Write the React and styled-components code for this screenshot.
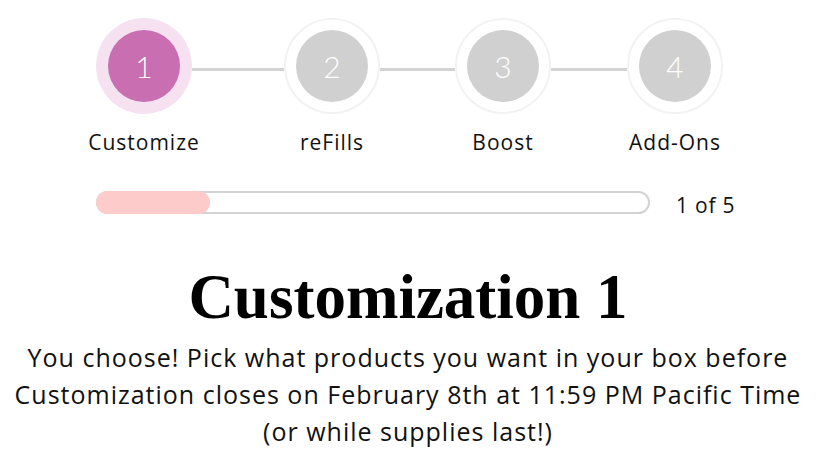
import React from "react";
import styled, { createGlobalStyle } from "styled-components";

const Global = createGlobalStyle`
  html, body { margin: 0; padding: 0; background: #fff; }
  body { font-family: "Open Sans", "Noto Sans", sans-serif; color: #111; }
`;

const Page = styled.div`
  width: 816px;
  height: 468px;
  overflow: hidden;
  display: flex;
  flex-direction: column;
  align-items: stretch;
`;

const Stepper = styled.div`
  display: flex;
  align-items: flex-start;
  padding: 18px 0 0 96px;
`;

const Step = styled.div`
  width: 96px;
  display: flex;
  flex-direction: column;
  align-items: center;
`;

const Ring = styled.div`
  width: 96px;
  height: 96px;
  box-sizing: border-box;
  border-radius: 50%;
  display: flex;
  align-items: center;
  justify-content: center;
  background: ${(p) => (p.$active ? "#f6e1f1" : "#fff")};
  border: ${(p) => (p.$active ? "none" : "2px solid #f2f2f2")};
`;

const Dot = styled.div`
  width: 72px;
  height: 72px;
  border-radius: 50%;
  background: ${(p) => (p.$active ? "#c96eb0" : "#d0d0d0")};
  color: #fff;
  display: flex;
  align-items: center;
  justify-content: center;
  font-family: Lato, sans-serif;
  font-size: 30px;
  font-weight: 300;
`;

const Label = styled.div`
  margin-top: 14px;
  font-size: 21px;
  letter-spacing: 1px;
  line-height: 28px;
  white-space: nowrap;
  color: #111;
`;

const Connector = styled.div`
  width: ${(p) => p.$w}px;
  height: 3px;
  background: #d3d3d3;
  margin-top: 50px;
`;

const ProgressRow = styled.div`
  display: flex;
  align-items: center;
  padding: 29px 0 0 96px;
  gap: 26px;
`;

const Track = styled.div`
  width: 554px;
  height: 23px;
  border-radius: 12px;
  box-shadow: inset 0 0 0 2px #d3d3d3;
  overflow: hidden;
  display: flex;
`;

const Fill = styled.div`
  height: 100%;
  border-radius: 12px;
  background: #fccbca;
`;

const Count = styled.div`
  margin-top: 6px;
  font-size: 21px;
  letter-spacing: 0.8px;
  color: #111;
`;

const Title = styled.h1`
  margin: 43px 0 0;
  text-align: center;
  font-family: "Liberation Serif", "DejaVu Serif", serif;
  font-weight: 700;
  font-size: 63px;
  line-height: 70px;
  color: #000;
`;

const Intro = styled.p`
  margin: 7px 0 0;
  text-align: center;
  font-size: 25px;
  letter-spacing: 1px;
  line-height: 37px;
  color: #111;
`;

const steps = [
  { n: 1, label: "Customize", active: true },
  { n: 2, label: "reFills" },
  { n: 3, label: "Boost" },
  { n: 4, label: "Add-Ons" },
];
const gaps = [92, 75, 76];

export default function App() {
  return (
    <Page>
      <Global />
      <Stepper>
        {steps.map((s, i) => (
          <React.Fragment key={s.n}>
            <Step>
              <Ring $active={s.active}>
                <Dot $active={s.active}>{s.n}</Dot>
              </Ring>
              <Label>{s.label}</Label>
            </Step>
            {i < gaps.length && <Connector $w={gaps[i]} />}
          </React.Fragment>
        ))}
      </Stepper>
      <ProgressRow>
        <Track>
          <Fill style={{ width: `${(114 / 554) * 100}%` }} />
        </Track>
        <Count>1 of 5</Count>
      </ProgressRow>
      <Title>Customization 1</Title>
      <Intro>
        You choose! Pick what products you want in your box before
        <br />
        Customization closes on February 8th at 11:59 PM Pacific Time
        <br />
        (or while supplies last!)
      </Intro>
    </Page>
  );
}
